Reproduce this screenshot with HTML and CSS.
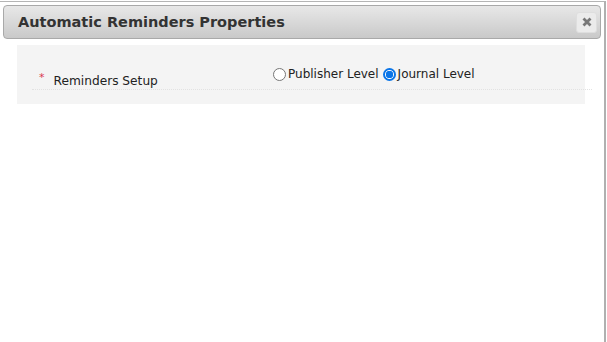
FILE: index.html
```html
<!DOCTYPE html>
<html>
<head>
<meta charset="utf-8">
<link rel="stylesheet" href="styles.css">
</head>
<body>
<div class="dialog">
  <div class="titlebar">
    <span class="title">Automatic Reminders Properties</span>
    <button class="close" aria-label="Close">
      <svg width="10" height="10" viewBox="0 0 10 10"><path d="M1.5 1.5 L8.5 8.5 M8.5 1.5 L1.5 8.5" stroke="#777" stroke-width="2.8" stroke-linecap="butt"/></svg>
    </button>
  </div>
  <div class="content">
    <div class="panel">
      <div class="row">
        <div class="label"><span class="req">*</span>Reminders Setup</div>
        <div class="options">
          <label class="opt"><span class="radio"></span>Publisher Level</label>
          <label class="opt"><span class="radio checked"></span>Journal Level</label>
        </div>
      </div>
    </div>
  </div>
</div>
</body>
</html>
```

FILE: styles.css
```css
html, body {
  margin: 0;
  padding: 0;
  background: #fff;
  width: 607px;
  height: 342px;
  overflow: hidden;
}
.dialog {
  box-sizing: border-box;
  width: 606px;
  height: 342px;
  border-top: 1px solid #b5b5b5;
  border-right: 2px solid #b0b0b0;
  margin-top: 1px;
  padding: 3px 3px 0 3px;
  font-family: "DejaVu Sans", Verdana, sans-serif;
}
.titlebar {
  height: 32px;
  border: 1px solid #a9a9a9;
  border-radius: 4px;
  background: linear-gradient(#e8e8e8, #c9c9c9);
  display: flex;
  align-items: center;
  justify-content: space-between;
  padding: 0 3px 0 14px;
}
.title {
  font-weight: bold;
  font-size: 14.5px;
  color: #333;
}
.close {
  width: 21px;
  height: 21px;
  border: 1px solid #dedede;
  border-radius: 3px;
  background: #ebebeb;
  padding: 0;
  display: flex;
  align-items: center;
  justify-content: center;
}
.content {
  padding: 6px 0 0 14px;
}
.panel {
  width: 568px;
  height: 59px;
  background: #f4f4f4;
  box-sizing: border-box;
  padding-top: 17px;
}
.row {
  display: flex;
  margin-left: 15px;
  width: 560px;
  height: 28px;
  border-bottom: 1px dotted #e2e2e2;
  box-sizing: border-box;
}
.label {
  width: 241px;
  font-size: 12.2px;
  color: #222;
  padding-top: 12px;
  line-height: 15px;
}
.req {
  color: #d9364f;
  font-size: 11px;
  margin: 0 9px 0 7px;
  position: relative;
  top: -4px;
}
.options {
  display: flex;
  font-size: 12px;
  color: #222;
  padding-top: 5px;
}
.opt {
  display: flex;
  align-items: flex-start;
  margin-right: 4px;
}
.radio {
  box-sizing: border-box;
  width: 13px;
  height: 13px;
  border: 1px solid #767676;
  border-radius: 50%;
  background: #fff;
  margin: 1px 2px 0 0;
}
.radio.checked {
  border: 2px solid #0a75e8;
  background: radial-gradient(circle, #0a75e8 0 3.5px, #fff 4px);
}
```
